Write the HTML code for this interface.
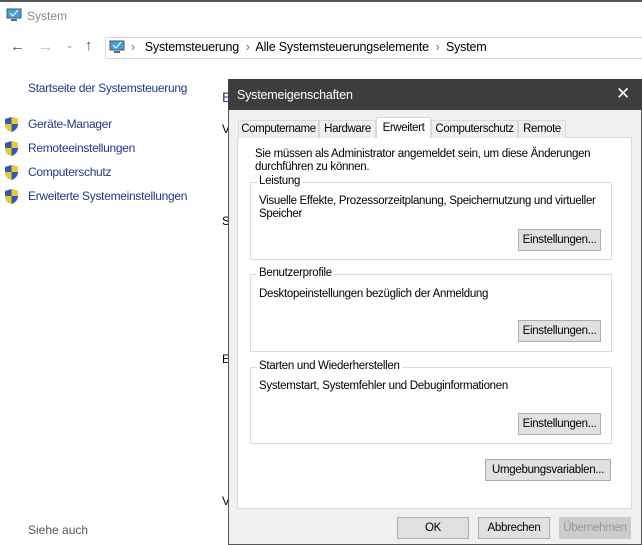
<!DOCTYPE html>
<html><head><style>
*{margin:0;padding:0;box-sizing:border-box}
body{width:642px;height:545px;overflow:hidden;background:#fff;font-family:"Liberation Sans",sans-serif;font-size:12px;color:#000;position:relative}
.a{position:absolute;white-space:nowrap}
.d{font-size:11.5px;letter-spacing:-0.3px}
.lnk{color:#1e3a8a;font-size:12px;letter-spacing:-0.3px}
.sh{position:absolute;width:13px;height:15px}
.btn{position:absolute;background:#e1e1e1;border:1px solid #adadad;text-align:center;line-height:20px;font-size:11.5px;letter-spacing:-0.3px}
.grp{position:absolute;border:1px solid #dcdcdc}
.gl{position:absolute;top:-8px;left:6px;background:#fff;padding:0 2px;font-size:11.5px;letter-spacing:-0.3px}
.tab{position:absolute;top:120px;height:18px;border:1px solid #d9d9d9;border-bottom:none;background:#f0f0f0;line-height:17px;text-align:center;font-size:11.5px;letter-spacing:-0.4px;overflow:hidden}
</style></head><body>
<div class="a" style="left:0;top:0;width:642px;height:2px;background:#555"></div>
<svg class="a" style="left:6px;top:8px" width="16" height="14"><rect x="1" y="1" width="14" height="9" fill="#3aa3e3" stroke="#555"/><path d="M4 5l3 3 5-6" stroke="#fff" fill="none"/><rect x="5" y="11" width="6" height="2" fill="#666"/></svg>
<div class="a" style="left:27px;top:9px;color:#888;font-size:12px">System</div>
<div class="a" style="left:10px;top:38px;color:#555;font-size:15px">←</div>
<div class="a" style="left:38px;top:38px;color:#bbb;font-size:15px">→</div>
<div class="a" style="left:66px;top:40px;color:#888;font-size:9px">⌄</div>
<div class="a" style="left:85px;top:37px;color:#555;font-size:15px">↑</div>
<div class="a" style="left:105px;top:37px;width:540px;height:22px;border:1px solid #d9d9d9"></div>
<svg class="a" style="left:109px;top:40px" width="16" height="14"><rect x="1" y="1" width="14" height="9" fill="#3aa3e3" stroke="#555"/><path d="M4 5l3 3 5-6" stroke="#fff" fill="none"/><rect x="5" y="11" width="6" height="2" fill="#666"/></svg>
<div class="a" style="left:131px;top:40px;font-size:12.5px;letter-spacing:-0.2px"><span style="color:#777">›</span>&nbsp;&nbsp; Systemsteuerung &nbsp;<span style="color:#777">›</span>&nbsp; Alle Systemsteuerungselemente &nbsp;<span style="color:#777">›</span>&nbsp; System</div>
<div class="a lnk" style="left:28px;top:81px">Startseite der Systemsteuerung</div>
<div class="a lnk" style="left:28px;top:117px">Geräte-Manager</div>
<div class="a lnk" style="left:28px;top:141px">Remoteeinstellungen</div>
<div class="a lnk" style="left:28px;top:165px">Computerschutz</div>
<div class="a lnk" style="left:28px;top:189px">Erweiterte Systemeinstellungen</div>
<svg class="sh" style="left:5px;top:117px" viewBox="0 0 13 15"><path d="M6.5 0L13 2v5c0 4-3 7-6.5 8C3 14 0 11 0 7V2z" fill="#2a5db0"/><path d="M6.5 0L13 2v5H6.5zM6.5 7V15C3 14 0 11 0 7z" fill="#f2c530"/></svg>
<svg class="sh" style="left:5px;top:141px" viewBox="0 0 13 15"><path d="M6.5 0L13 2v5c0 4-3 7-6.5 8C3 14 0 11 0 7V2z" fill="#2a5db0"/><path d="M6.5 0L13 2v5H6.5zM6.5 7V15C3 14 0 11 0 7z" fill="#f2c530"/></svg>
<svg class="sh" style="left:5px;top:165px" viewBox="0 0 13 15"><path d="M6.5 0L13 2v5c0 4-3 7-6.5 8C3 14 0 11 0 7V2z" fill="#2a5db0"/><path d="M6.5 0L13 2v5H6.5zM6.5 7V15C3 14 0 11 0 7z" fill="#f2c530"/></svg>
<svg class="sh" style="left:5px;top:189px" viewBox="0 0 13 15"><path d="M6.5 0L13 2v5c0 4-3 7-6.5 8C3 14 0 11 0 7V2z" fill="#2a5db0"/><path d="M6.5 0L13 2v5H6.5zM6.5 7V15C3 14 0 11 0 7z" fill="#f2c530"/></svg>
<div class="a" style="left:28px;top:523px;color:#555">Siehe auch</div>
<div class="a" style="left:222px;top:89px;color:#1e3a8a;font-size:14px">E</div>
<div class="a" style="left:222px;top:122px">V</div>
<div class="a" style="left:222px;top:214px">S</div>
<div class="a" style="left:222px;top:352px">E</div>
<div class="a" style="left:222px;top:494px">V</div>
<div class="a" style="left:636px;top:155px;color:#1e3a8a;font-size:16px">W</div>
<!-- dialog -->
<div class="a" style="left:228px;top:79px;width:414px;height:466px;background:#f0f0f0;border:1px solid #555"></div>
<div class="a" style="left:228px;top:79px;width:414px;height:31px;background:#3d3d3d"></div>
<div class="a" style="left:237px;top:88px;color:#fff;font-size:12.5px;letter-spacing:-0.2px">Systemeigenschaften</div>
<div class="a" style="left:616px;top:84px;color:#fff;font-size:17px;font-weight:300">✕</div>
<div class="a" style="left:237px;top:137px;width:395px;height:372px;background:#fff;border:1px solid #d9d9d9"></div>
<div class="tab" style="left:238px;width:81px">Computername</div>
<div class="tab" style="left:319px;width:57px">Hardware</div>
<div class="tab" style="left:376px;top:117px;height:21px;width:55px;background:#fff;line-height:20px">Erweitert</div>
<div class="tab" style="left:431px;width:87px">Computerschutz</div>
<div class="tab" style="left:518px;width:48px">Remote</div>
<div class="a d" style="left:255px;top:148px;white-space:normal;width:340px;line-height:13px">Sie müssen als Administrator angemeldet sein, um diese Änderungen durchführen zu können.</div>
<div class="grp" style="left:250px;top:182px;width:362px;height:78px"><span class="gl">Leistung</span></div>
<div class="a d" style="left:259px;top:195px;width:345px;white-space:normal;line-height:13px">Visuelle Effekte, Prozessorzeitplanung, Speichernutzung und virtueller Speicher</div>
<div class="btn" style="left:518px;top:229px;width:83px">Einstellungen...</div>
<div class="grp" style="left:250px;top:274px;width:362px;height:78px"><span class="gl">Benutzerprofile</span></div>
<div class="a d" style="left:259px;top:288px">Desktopeinstellungen bezüglich der Anmeldung</div>
<div class="btn" style="left:518px;top:320px;width:83px">Einstellungen...</div>
<div class="grp" style="left:250px;top:367px;width:362px;height:77px"><span class="gl">Starten und Wiederherstellen</span></div>
<div class="a d" style="left:259px;top:380px">Systemstart, Systemfehler und Debuginformationen</div>
<div class="btn" style="left:518px;top:413px;width:83px">Einstellungen...</div>
<div class="btn" style="left:485px;top:459px;width:126px">Umgebungsvariablen...</div>
<div class="btn" style="left:397px;top:517px;width:72px">OK</div>
<div class="btn" style="left:478px;top:517px;width:72px">Abbrechen</div>
<div class="btn" style="left:559px;top:517px;width:72px;color:#999;border-color:#ccc;background:#ccc">Übernehmen</div>
</body></html>
